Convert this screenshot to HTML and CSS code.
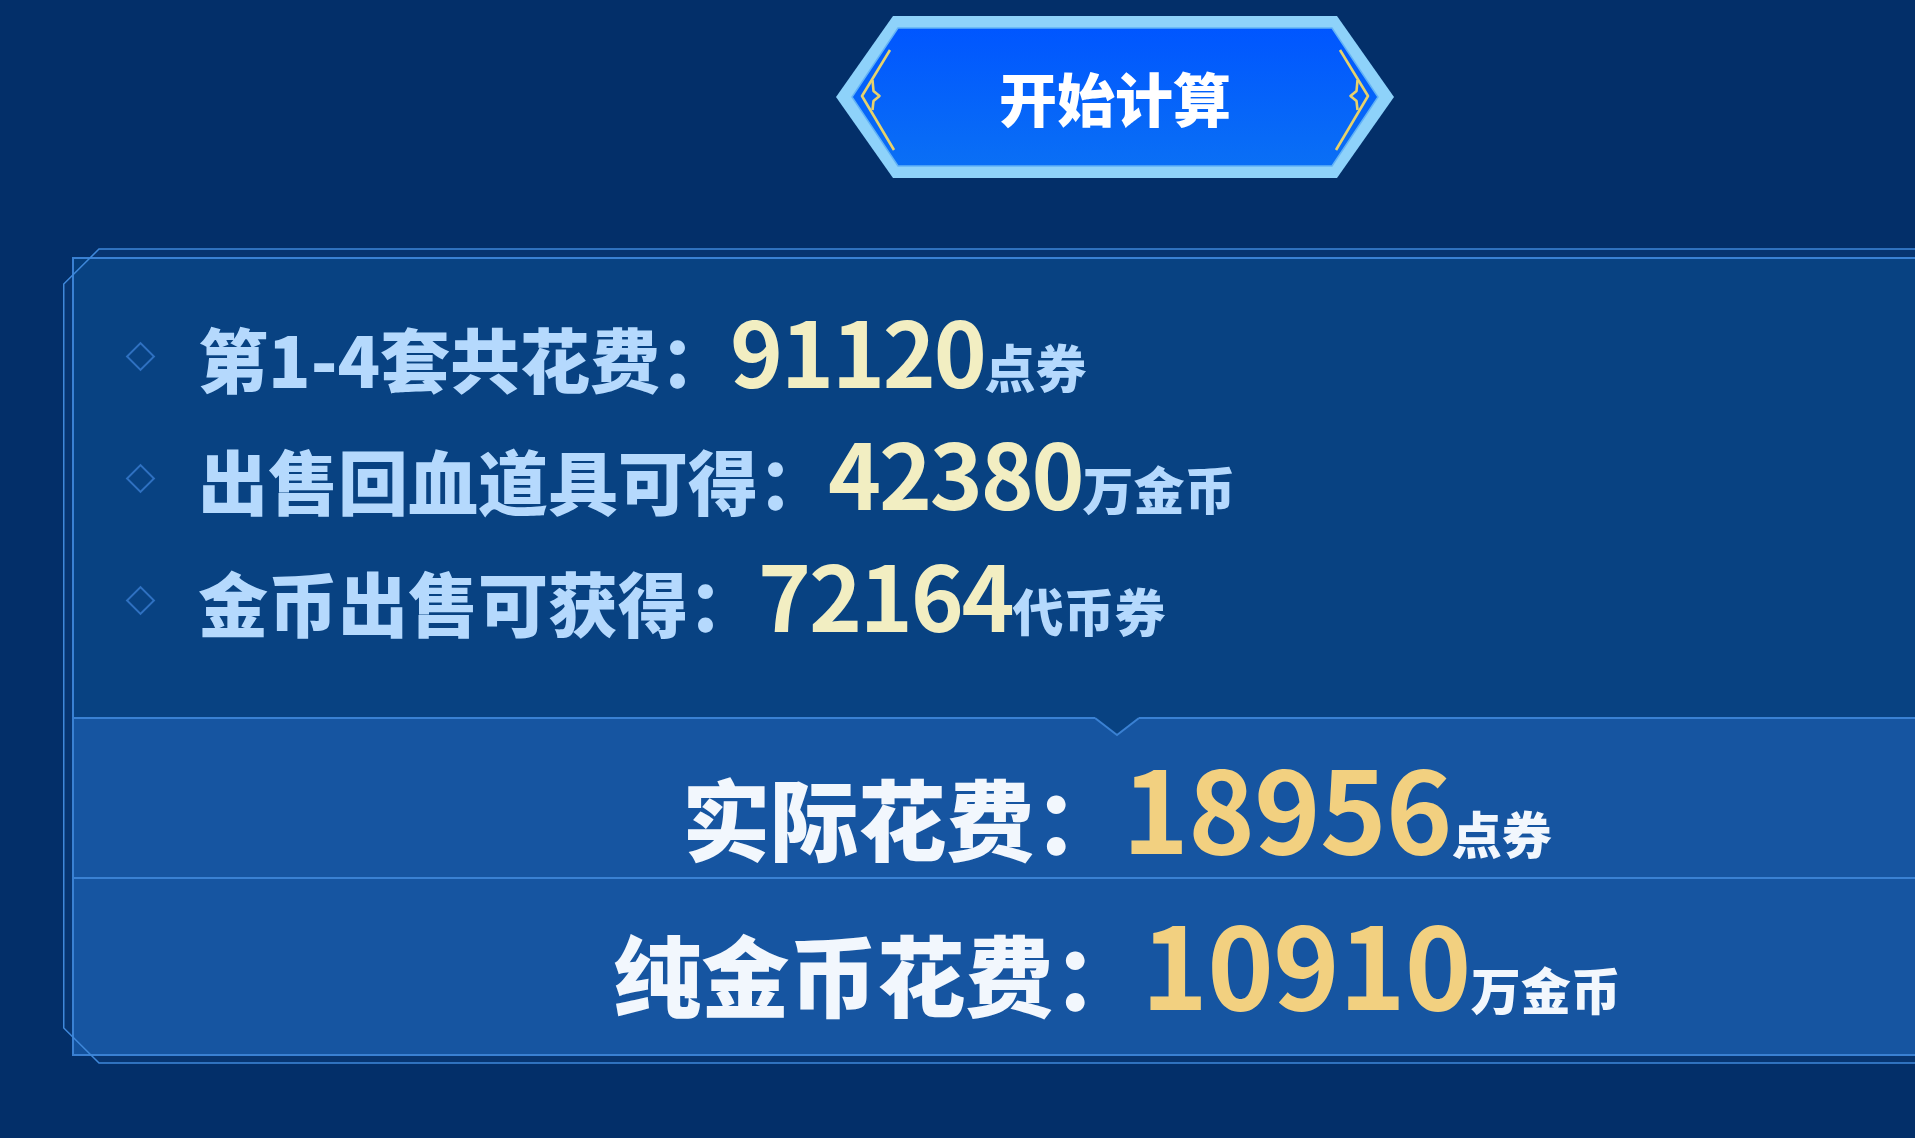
FILE: index.html
```html
<!DOCTYPE html>
<html lang="zh-CN">
<head>
<meta charset="utf-8">
<title>开始计算</title>
<link rel="stylesheet" href="styles.css">
</head>
<body>
<div class="page">
  <div class="toolbar">
    <button class="calc-btn" type="button">
      <svg class="calc-btn__shape" viewBox="0 0 558 162" width="558" height="162" aria-hidden="true">
        <defs>
          <linearGradient id="btnFill" x1="0" y1="0" x2="0" y2="1">
            <stop offset="0" stop-color="#0056ff"/>
            <stop offset="1" stop-color="#0a6ff5"/>
          </linearGradient>
        </defs>
        <polygon points="57,0 501,0 558,81 501,162 57,162 0,81" fill="#8ed2fa"/>
        <polygon points="62,12 496,12 542,81 496,150 62,150 16,81" fill="url(#btnFill)" stroke="#62b2f6" stroke-width="1.5"/>
        <g fill="none" stroke="#e6d26c" stroke-width="2.6" stroke-linejoin="round">
          <polyline points="54,34 26,80 58,134"/>
          <polyline points="36.5,64 37.5,75 43.5,80 37.5,85 36.5,94"/>
          <polyline points="504,34 532,80 500,134"/>
          <polyline points="521.5,64 520.5,75 514.5,80 520.5,85 521.5,94"/>
        </g>
      </svg>
      <span class="calc-btn__label">开始计算</span>
    </button>
  </div>

  <section class="frame">
    <svg class="frame__outline" width="2097" height="816" viewBox="0 0 2097 816" aria-hidden="true">
      <path d="M2097 1 H36 L0.75 36 V780 L36 815 H2097 Z" fill="rgba(70,140,220,0.07)"/>
      <path d="M2097 1 H36 L0.75 36 V780 L36 815 H2097" fill="none" stroke="#3f88da" stroke-width="1.5"/>
    </svg>

    <div class="panel">
      <ul class="stats">
        <li class="stat">
          <i class="stat__mark"></i>
          <span class="stat__text"><span class="stat__label">第1-4套共花费：</span><span class="stat__value">91120</span><span class="stat__unit">点券</span></span>
        </li>
        <li class="stat">
          <i class="stat__mark"></i>
          <span class="stat__text"><span class="stat__label">出售回血道具可得：</span><span class="stat__value">42380</span><span class="stat__unit">万金币</span></span>
        </li>
        <li class="stat">
          <i class="stat__mark"></i>
          <span class="stat__text"><span class="stat__label">金币出售可获得：</span><span class="stat__value">72164</span><span class="stat__unit">代币券</span></span>
        </li>
        <svg class="stats__notch" width="44" height="22" viewBox="0 0 44 22" aria-hidden="true">
          <polygon points="0,0 44,0 44,1 22,18 0,1" fill="#043d7b"/>
          <polyline points="0,1 22,18 44,1" fill="none" stroke="#3a80d2" stroke-width="2"/>
        </svg>
      </ul>

      <div class="totals">
        <div class="total total--first">
          <span class="total__label">实际花费：</span><span class="total__value">18956</span><span class="total__unit">点券</span>
        </div>
        <div class="total total--second">
          <span class="total__label">纯金币花费：</span><span class="total__value">10910</span><span class="total__unit">万金币</span>
        </div>
      </div>
    </div>
  </section>
</div>
</body>
</html>
```

FILE: styles.css
```css
html, body {
  margin: 0;
  padding: 0;
  height: 100%;
  overflow: hidden;
  background: #032f69;
}

.page {
  width: 2230px;
  height: 1138px;
  font-family: "Noto Sans CJK SC", "Noto Sans", sans-serif;
  font-weight: 900;
  background: #032f69;
}

/* ---- action button ---- */
.toolbar {
  height: 248px;
  display: flex;
  justify-content: center;
  align-items: flex-start;
}

.calc-btn {
  position: relative;
  margin-top: 16px;
  width: 558px;
  height: 162px;
  padding: 0;
  border: 0;
  background: none;
  display: flex;
  align-items: center;
  justify-content: center;
  cursor: pointer;
  font: inherit;
}

.calc-btn__shape {
  position: absolute;
  left: 0;
  top: 0;
}

.calc-btn__label {
  position: relative;
  color: #ffffff;
  font-size: 58px;
  line-height: 1;
}

/* ---- result frame ---- */
.frame {
  position: relative;
  margin-left: 63px;
  width: 2097px;
  height: 816px;
  box-sizing: border-box;
  padding: 9px 0 8px 9px;
}

.frame__outline {
  position: absolute;
  left: 0;
  top: 0;
  z-index: 2;
  pointer-events: none;
}

.panel {
  position: relative;
  z-index: 1;
  height: 799px;
  box-sizing: border-box;
  border: 2px solid #3a80d2;
  border-right: 0;
  background: #043d7b;
  display: flex;
  flex-direction: column;
}

/* ---- upper list ---- */
.stats {
  position: relative;
  list-style: none;
  margin: 0;
  height: 460px;
  box-sizing: border-box;
  padding: 29px 0 0 52px;
  border-bottom: 2px solid #3a80d2;
}

.stats__notch {
  position: absolute;
  left: calc(50% - 22px);
  bottom: -22px;
}

.stat {
  height: 122px;
  display: flex;
  align-items: center;
  font-size: 70px;
  line-height: 1;
  color: #bedfff;
}

.stat__mark {
  width: 17px;
  height: 17px;
  margin: 14px 0 0 4px;
  border: 2px solid #2e6fbf;
  transform: rotate(45deg);
  flex: none;
}

.stat__text {
  margin-left: 47px;
  white-space: nowrap;
}

.stat__value {
  font-size: 90px;
  font-weight: 700;
  letter-spacing: -2.2px;
  color: #fff6c0;
}

.stat__unit {
  font-size: 51px;
}

/* ---- totals ---- */
.totals {
  flex: 1;
  background: #13519c;
  display: flex;
  flex-direction: column;
}

.total {
  display: flex;
  justify-content: center;
  align-items: baseline;
  white-space: nowrap;
  color: #ffffff;
  font-size: 88px;
  line-height: 1;
  box-sizing: border-box;
}

.total--first {
  height: 160px;
  padding-top: 30px;
  border-bottom: 2px solid #3a80d2;
}

.total--second {
  flex: 1;
  padding-top: 26px;
}

.total__value {
  font-size: 113px;
  font-weight: 700;
  letter-spacing: -0.8px;
  color: #ffd679;
}

.total__unit {
  font-size: 50px;
}
```
